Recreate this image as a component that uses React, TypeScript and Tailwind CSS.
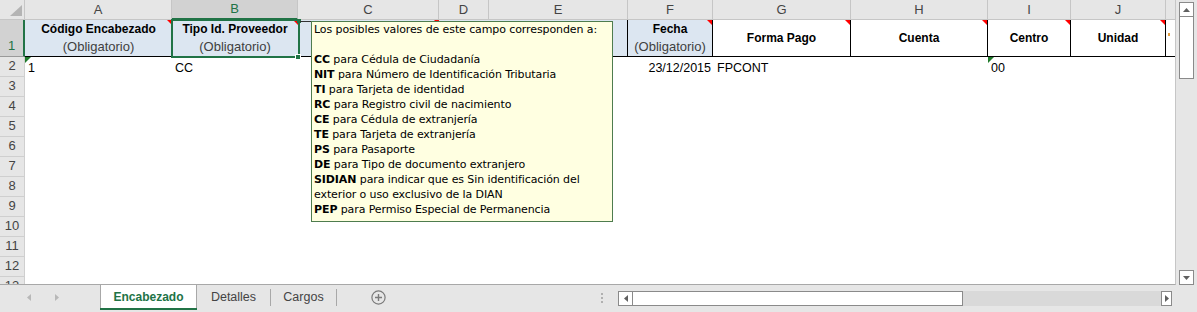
import React from "react";

const cols = [
  { k: "A", w: "w-[147px]" },
  { k: "B", w: "w-[126px]" },
  { k: "C", w: "w-[141px]" },
  { k: "D", w: "w-[50px]" },
  { k: "E", w: "w-[139px]" },
  { k: "F", w: "w-[85px]" },
  { k: "G", w: "w-[138px]" },
  { k: "H", w: "w-[137px]" },
  { k: "I", w: "w-[83px]" },
  { k: "J", w: "w-[95px]" },
  { k: "", w: "w-[10px]" },
];

const codes = [
  { c: "CC", t: "para Cédula de Ciudadanía" },
  { c: "NIT", t: "para Número de Identificación Tributaria" },
  { c: "TI", t: "para Tarjeta de identidad" },
  { c: "RC", t: "para Registro civil de nacimiento" },
  { c: "CE", t: "para Cédula de extranjería" },
  { c: "TE", t: "para Tarjeta de extranjería" },
  { c: "PS", t: "para Pasaporte" },
  { c: "DE", t: "para Tipo de documento extranjero" },
  { c: "SIDIAN", t: "para indicar que es Sin identificación del" },
];

const RedTri = () => (
  <span className="absolute top-0 right-0 h-0 w-0 border-l-[5px] border-t-[5px] border-l-transparent border-t-[#ff0000]" />
);

const GreenTri = () => (
  <span className="absolute top-0 left-0 h-0 w-0 border-r-[6px] border-t-[6px] border-r-transparent border-t-[#1f7a2a]" />
);

function HeadCell({ title, sub, w, fill, right, tri }: { title: string; sub?: string; w: string; fill?: boolean; right?: boolean; tri?: boolean }) {
  return (
    <div
      className={`${w} shrink-0 h-full relative flex flex-col items-center justify-center border-b border-b-black ${fill ? "bg-[#dce6f1]" : "bg-white"} ${right ? "border-r border-r-black" : ""}`}
    >
      {tri && <RedTri />}
      {title && <span className="text-[12px] font-bold leading-[18px] text-black whitespace-nowrap">{title}</span>}
      {sub && <span className="text-[13px] leading-[18px] text-[#404040] whitespace-nowrap">{sub}</span>}
    </div>
  );
}

export default function App() {
  const rows = [2, 3, 4, 5, 6, 7, 8, 9, 10, 11, 12, 13];
  return (
    <div className="w-[1197px] h-[312px] overflow-hidden bg-[#e6e6e6] flex flex-col font-['Liberation_Sans',Arial,sans-serif] text-[#222]">
      <div className="flex h-[285px]">
        {/* sheet grid */}
        <div className="w-[1176px] h-[285px] relative overflow-hidden bg-white border-b border-[#a8a8a8] border-r border-r-[#c6c6c6]">
          {/* column headers */}
          <div className="flex h-[20px]">
            <div className="w-[25px] shrink-0 bg-[#e6e6e6] border-r border-b border-[#c6c6c6] relative">
              <svg className="absolute left-[10px] top-[5px]" width="12" height="11" viewBox="0 0 12 11">
                <polygon points="12,0 12,11 0,11" fill="#b4b4b4" />
              </svg>
            </div>
            {cols.map((c, i) => (
              <div
                key={i}
                className={`${c.w} shrink-0 flex items-center justify-center text-[13px] border-r border-[#c6c6c6] ${
                  c.k === "B" ? "bg-[#d2d2d2] text-[#217346] border-b-2 border-b-[#217346]" : "bg-[#e6e6e6] text-[#444] border-b border-b-[#c6c6c6]"
                }`}
              >
                {c.k}
              </div>
            ))}
          </div>

          {/* row 1 */}
          <div className="flex h-[37px]">
            <div className="w-[25px] shrink-0 bg-[#d2d2d2] text-[#217346] text-[13px] flex items-end justify-center pb-[1px] border-r-2 border-r-[#217346] border-b border-b-[#9a9a9a]">
              1
            </div>
            <HeadCell w="w-[147px]" title="Código Encabezado" sub="(Obligatorio)" fill tri />
            <HeadCell w="w-[126px]" title="Tipo Id. Proveedor" sub="(Obligatorio)" fill tri />
            <HeadCell w="w-[141px]" title="" fill tri />
            <HeadCell w="w-[50px]" title="" fill />
            <HeadCell w="w-[139px]" title="" fill right />
            <HeadCell w="w-[85px]" title="Fecha" sub="(Obligatorio)" fill right tri />
            <HeadCell w="w-[138px]" title="Forma Pago" right tri />
            <HeadCell w="w-[137px]" title="Cuenta" right tri />
            <HeadCell w="w-[83px]" title="Centro" right tri />
            <HeadCell w="w-[95px]" title="Unidad" right tri />
            <div className="w-[10px] shrink-0 h-full relative border-b border-b-black">
              <span className="absolute left-[2px] top-[13px] w-[2px] h-[3px] bg-[#e6a040]" />
            </div>
          </div>

          {/* data rows */}
          {rows.map((r) => (
            <div key={r} className="flex h-[20px]">
              <div className="w-[25px] shrink-0 bg-[#e6e6e6] text-[#444] text-[13px] flex items-end justify-center pb-[1px] border-r border-b border-[#cfcfcf]">
                {r}
              </div>
              {r === 2 ? (
                <div className="flex text-[12.5px] text-black">
                  <div className="w-[147px] shrink-0 relative pl-[3px] pt-[2px]">
                    <GreenTri />1
                  </div>
                  <div className="w-[126px] shrink-0 pl-[3px] pt-[2px]">CC</div>
                  <div className="w-[141px] shrink-0" />
                  <div className="w-[50px] shrink-0" />
                  <div className="w-[139px] shrink-0" />
                  <div className="w-[85px] shrink-0 text-right pr-[2px] pt-[2px]">23/12/2015</div>
                  <div className="w-[138px] shrink-0 pl-[4px] pt-[2px]">FPCONT</div>
                  <div className="w-[137px] shrink-0" />
                  <div className="w-[83px] shrink-0 relative pl-[3px] pt-[2px]">
                    <GreenTri />00
                  </div>
                </div>
              ) : null}
            </div>
          ))}

          {/* selection of B1 */}
          <div className="absolute left-[171px] top-[19px] w-[129px] h-[39px] border-2 border-[#217346]" />
          <div className="absolute left-[295px] top-[54px] w-[6px] h-[6px] bg-[#217346] border border-white" />

          {/* comment arrow */}
          <div className="absolute left-[297px] top-[19px] w-[4px] h-[4px] bg-[#217346]" />
          <div className="absolute left-[300px] top-[21px] w-[11px] h-[1px] bg-[#333]" />

          {/* comment */}
          <div className="absolute left-[311px] top-[21px] w-[302px] h-[201px] bg-[#ffffe1] border border-[#4e7c4e] pl-[2px] text-[11px] leading-[15px] tracking-[-0.1px] text-black font-['DejaVu_Sans',Verdana,sans-serif] whitespace-nowrap">
            <div>Los posibles valores de este campo corresponden a:</div>
            <div>&nbsp;</div>
            {codes.map((x) => (
              <div key={x.c}>
                <b>{x.c}</b> {x.t}
              </div>
            ))}
            <div>exterior o uso exclusivo de la DIAN</div>
            <div>
              <b>PEP</b> para Permiso Especial de Permanencia
            </div>
          </div>
        </div>

        {/* vertical scrollbar */}
        <div className="w-[21px] h-[285px] flex flex-col items-center pt-[2px] bg-[#e6e6e6]">
          <div className="w-[15px] h-[15px] shrink-0 bg-white border border-[#8a8a8a] flex items-center justify-center">
            <svg width="7" height="4" viewBox="0 0 7 4"><polygon points="3.5,0 7,4 0,4" fill="#606060" /></svg>
          </div>
          <div className="w-[15px] h-[62px] shrink-0 bg-white border border-[#8a8a8a] border-t-0" />
          <div className="flex-1 w-[15px]" />
          <div className="w-[15px] h-[15px] shrink-0 bg-white border border-[#8a8a8a] flex items-center justify-center">
            <svg width="7" height="4" viewBox="0 0 7 4"><polygon points="0,0 7,0 3.5,4" fill="#606060" /></svg>
          </div>
        </div>
      </div>

      {/* sheet tabs */}
      <div className="flex h-[27px] items-start text-[12.5px]">
        <div className="w-[100px] h-[25px] flex items-center">
          <svg className="ml-[27px]" width="4" height="7" viewBox="0 0 4 7"><polygon points="4,0 4,7 0,3.5" fill="#b8b8b8" /></svg>
          <svg className="ml-[24px]" width="4" height="7" viewBox="0 0 4 7"><polygon points="0,0 4,3.5 0,7" fill="#b8b8b8" /></svg>
        </div>
        <div className="w-[97px] h-[25px] bg-white border-x border-[#a8a8a8] flex flex-col">
          <div className="flex-1 flex items-center justify-center font-bold text-[12px] text-[#217346]">Encabezado</div>
          <div className="h-[2px] bg-[#217346] mx-[-1px]" />
        </div>
        <div className="w-[73px] h-[25px] flex items-center justify-center text-[#444]">Detalles</div>
        <div className="w-[1px] h-[17px] mt-[4px] bg-[#a8a8a8]" />
        <div className="w-[65px] h-[25px] flex items-center justify-center text-[#444]">Cargos</div>
        <div className="w-[1px] h-[17px] mt-[4px] bg-[#a8a8a8]" />
        <div className="w-[82px] h-[25px] flex items-center justify-center">
          <svg width="15" height="15" viewBox="0 0 15 15">
            <circle cx="7.5" cy="7.5" r="6.6" fill="none" stroke="#7a7a7a" strokeWidth="1.2" />
            <path d="M7.5 4v7M4 7.5h7" stroke="#7a7a7a" strokeWidth="1.4" />
          </svg>
        </div>
        <div className="w-[181px] h-[25px]" />
        <div className="w-[4px] h-[25px] flex flex-col items-center justify-center gap-[2px]">
          <span className="w-[2px] h-[2px] bg-[#b0b0b0]" />
          <span className="w-[2px] h-[2px] bg-[#b0b0b0]" />
          <span className="w-[2px] h-[2px] bg-[#b0b0b0]" />
        </div>
        {/* horizontal scrollbar */}
        <div className="flex h-[15px] mt-[6px] ml-[14px]">
          <div className="w-[15px] h-[15px] bg-white border border-[#8a8a8a] flex items-center justify-center">
            <svg width="4" height="7" viewBox="0 0 4 7"><polygon points="4,0 4,7 0,3.5" fill="#606060" /></svg>
          </div>
          <div className="w-[330px] h-[15px] bg-white border border-[#8a8a8a] border-l-0" />
          <div className="w-[198px] h-[15px] bg-[#d9d9d9]" />
          <div className="w-[11px] h-[15px] bg-white border border-[#8a8a8a] flex items-center justify-center">
            <svg width="4" height="7" viewBox="0 0 4 7"><polygon points="0,0 4,3.5 0,7" fill="#606060" /></svg>
          </div>
        </div>
      </div>
    </div>
  );
}
